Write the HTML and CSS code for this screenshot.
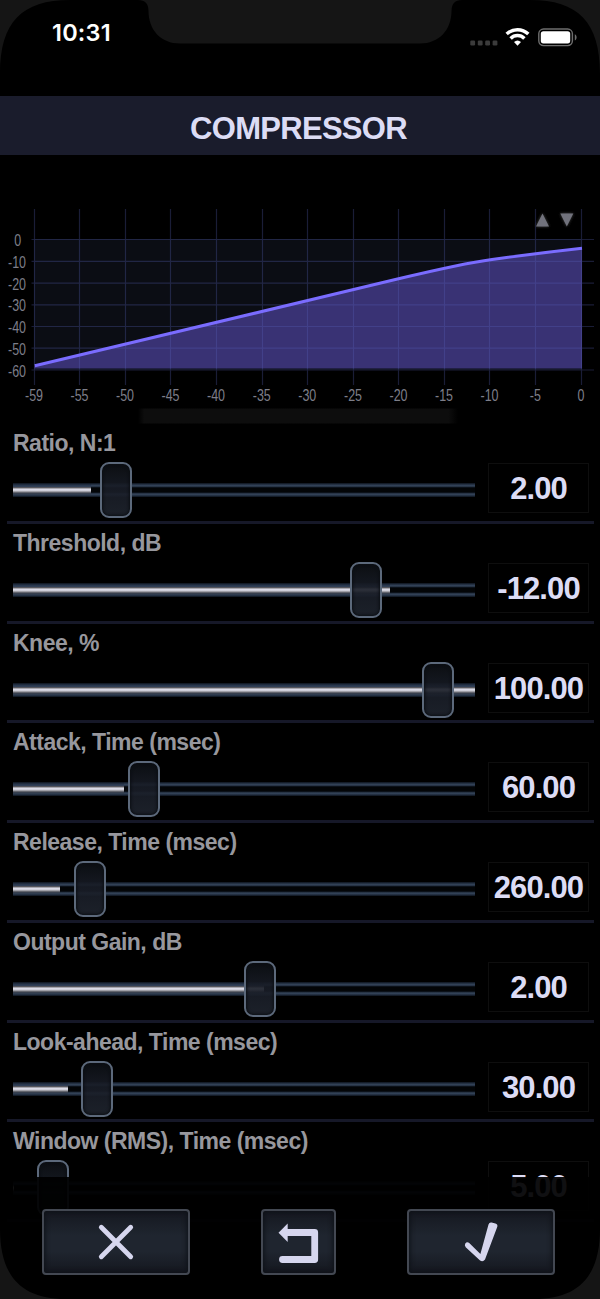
FILE: index.html
```html
<!DOCTYPE html>
<html lang="en">

<head>
    <meta charset="UTF-8">
    <meta name="viewport" content="width=device-width, initial-scale=1.0">
    <title>Compressor</title>
    <link rel="stylesheet" href="styles.css">
</head>

<body>
    <main class="screen">
        <header class="status">
            <span class="time">10:31</span>
            <svg class="status-icons" width="108" height="24" viewBox="0 0 108 24">
                <g fill="#3b3b3b">
                    <rect x="0.3" y="15.6" width="4.8" height="4.8" rx="1.2" />
                    <rect x="7.8" y="15.6" width="4.8" height="4.8" rx="1.2" />
                    <rect x="15.2" y="15.6" width="4.8" height="4.8" rx="1.2" />
                    <rect x="22.6" y="15.6" width="4.8" height="4.8" rx="1.2" />
                </g>
                <g fill="none" stroke="#fff" stroke-width="3.5">
                    <path d="M36.7 9a15.6 15.6 0 0 1 21.600 0" />
                    <path d="M40.6 13.400a9.800 9.800 0 0 1 13.800 0" />
                </g>
                <path d="M47.500 20.800l-3.500-3.700a5.200 5.200 0 0 1 7 0z" fill="#fff" />
                <rect x="68.800" y="4" width="33.600" height="16.600" rx="4.800" fill="none" stroke="#6e6e6e" stroke-width="1.400" />
                <rect x="70.800" y="6.200" width="29.400" height="12.200" rx="2.600" fill="#fff" />
                <path d="M104.800 9.200c2.400 1 2.400 5.200 0 6.200z" fill="#6e6e6e" />
            </svg>
        </header>

        <h1>COMPRESSOR</h1>

        <section class="graph">
            <svg width="600" height="240" viewBox="0 185 600 240">
                <defs>
                    <filter id="glow" x="-50%" y="-50%" width="200%" height="200%">
                        <feDropShadow dx="0" dy="0" stdDeviation="1.6" flood-color="#444" />
                    </filter>
                    <linearGradient id="band">
                        <stop offset="0" stop-color="#000" />
                        <stop offset="0.02" stop-color="#0d0d0d" />
                        <stop offset="0.97" stop-color="#0d0d0d" />
                        <stop offset="1" stop-color="#000" />
                    </linearGradient>
                </defs>
                <rect x="34" y="239" width="547.5" height="131" fill="#0b0d14" />
                <path class="area" d="M34.5 366L398.5 278.8C450 266.5 470 262.5 492 259.5S540 253 582 248.3V368.5H34.5z" />
                <path class="grid" d="M34.5 209V385M79.5 209V385M125.5 209V385M170.5 209V385M216.5 209V385M262.5 209V385M307.5 209V385M353.5 209V385M398.5 209V385M444.5 209V385M489.5 209V385M535.5 209V385M581.5 209V385M31.5 239.5H594M31.5 261.3H594M31.5 283.2H594M31.5 304.8H594M31.5 326.5H594M31.5 348.2H594M31.5 370H594" />
                <path class="curve" d="M34.8 365.8L398.5 278.8C450 266.5 470 262.5 492 259.5S540 253 582 248.3" />
                <g class="labels">
                    <text transform="translate(17.7 246) scale(.79 1)">0</text>
                    <text transform="translate(17 267.8) scale(.79 1)">-10</text>
                    <text transform="translate(17 289.5) scale(.79 1)">-20</text>
                    <text transform="translate(17 311.3) scale(.79 1)">-30</text>
                    <text transform="translate(17 333.1) scale(.79 1)">-40</text>
                    <text transform="translate(17 354.8) scale(.79 1)">-50</text>
                    <text transform="translate(17 376.7) scale(.79 1)">-60</text>
                    <text transform="translate(34 400.7) scale(.79 1)">-59</text>
                    <text transform="translate(79.5 400.7) scale(.79 1)">-55</text>
                    <text transform="translate(125 400.7) scale(.79 1)">-50</text>
                    <text transform="translate(170.5 400.7) scale(.79 1)">-45</text>
                    <text transform="translate(216 400.7) scale(.79 1)">-40</text>
                    <text transform="translate(261.8 400.7) scale(.79 1)">-35</text>
                    <text transform="translate(307.3 400.7) scale(.79 1)">-30</text>
                    <text transform="translate(353 400.7) scale(.79 1)">-25</text>
                    <text transform="translate(398.5 400.7) scale(.79 1)">-20</text>
                    <text transform="translate(444 400.7) scale(.79 1)">-15</text>
                    <text transform="translate(489.5 400.7) scale(.79 1)">-10</text>
                    <text transform="translate(535.3 400.7) scale(.79 1)">-5</text>
                    <text transform="translate(581 400.7) scale(.79 1)">0</text>
                </g>
                <path d="M542.5 213.5L549 226.5H536zM560.3 213.5H573.3L566.8 226.5z" fill="#71727c" filter="url(#glow)" />
                <rect x="138" y="408.5" width="320" height="15" fill="url(#band)" />
            </svg>
        </section>

        <section class="params">
            <div class="param">
                <label>Ratio, N:1</label>
                <div class="control">
                    <div class="track"><div class="fill" style="width: 16.9%"></div><div class="thumb" style="left: 18.9%"></div></div>
                    <output>2.00</output>
                </div>
            </div>
            <div class="param">
                <label>Threshold, dB</label>
                <div class="control">
                    <div class="track"><div class="fill" style="width: 81.6%"></div><div class="thumb" style="left: 73%"></div></div>
                    <output>-12.00</output>
                </div>
            </div>
            <div class="param">
                <label>Knee, %</label>
                <div class="control">
                    <div class="track"><div class="fill" style="width: 100%"></div><div class="thumb" style="left: 88.6%"></div></div>
                    <output>100.00</output>
                </div>
            </div>
            <div class="param">
                <label>Attack, Time (msec)</label>
                <div class="control">
                    <div class="track"><div class="fill" style="width: 24.1%"></div><div class="thumb" style="left: 24.8%"></div></div>
                    <output>60.00</output>
                </div>
            </div>
            <div class="param">
                <label>Release, Time (msec)</label>
                <div class="control">
                    <div class="track"><div class="fill" style="width: 10.1%"></div><div class="thumb" style="left: 13.2%"></div></div>
                    <output>260.00</output>
                </div>
            </div>
            <div class="param">
                <label>Output Gain, dB</label>
                <div class="control">
                    <div class="track"><div class="fill" style="width: 54.3%"></div><div class="thumb" style="left: 50%"></div></div>
                    <output>2.00</output>
                </div>
            </div>
            <div class="param">
                <label>Look-ahead, Time (msec)</label>
                <div class="control">
                    <div class="track"><div class="fill" style="width: 12%"></div><div class="thumb" style="left: 14.8%"></div></div>
                    <output>30.00</output>
                </div>
            </div>
            <div class="param">
                <label>Window (RMS), Time (msec)</label>
                <div class="control">
                    <div class="track"><div class="fill" style="width: 0.3%"></div><div class="thumb" style="left: 5.1%"></div></div>
                    <output>5.00</output>
                </div>
            </div>
        </section>

        <footer class="actions">
            <button class="wide" aria-label="Cancel">
                <svg width="40" height="40" viewBox="0 0 40 40">
                    <path d="M5.3 5.3L34.7 34.7M34.7 5.3L5.3 34.7" fill="none" stroke="#d6d6ee" stroke-width="4.8" stroke-linecap="round" />
                </svg>
            </button>
            <button class="small" aria-label="Reset">
                <svg width="44" height="44" viewBox="0 0 44 44">
                    <path d="M9 12.5H37.7V39.500H5.500" fill="none" stroke="#d6d6ee" stroke-width="6.800" stroke-linejoin="round" stroke-linecap="round" />
                    <path d="M1.500 12.700L10.700 3.500V22z" fill="#d6d6ee" />
                </svg>
            </button>
            <button class="wide" aria-label="Apply">
                <svg width="40" height="44" viewBox="0 0 40 44">
                    <path d="M4.300 23.600Q6 21.300 8.500 23.300L19.400 34L27.500 4.500Q28.200 2.200 30.600 2.600L34.400 3.400Q37 4.200 36.300 6.800L24 39.500Q21.800 42.700 18.800 40.300L4.700 27.300Q3.200 25.400 4.300 23.600z" fill="#d6d6ee" />
                </svg>
            </button>
        </footer>

        <!-- phone bezel: rounded corners and notch -->
        <svg class="bezel" width="600" height="1299" viewBox="0 0 600 1299">
            <path d="M0 0H70C22 0 0 22 0 74zM600 0H530C578 0 600 22 600 74zM0 1299H66C22 1299 0 1277 0 1229zM600 1299H534C578 1299 600 1277 600 1229z" />
            <path d="M138 0Q148.500 0 148.500 11C148.500 30 161 43.500 180 43.500H420C439 43.500 451.500 30 451.500 11Q451.500 0 462 0z" />
        </svg>
    </main>
</body>

</html>
```

FILE: styles.css
```css
* {
    padding: 0;
    margin: 0;
    box-sizing: border-box;
}

body {
    background-color: black;
    font-family: "Liberation Sans", Arial, sans-serif;
}

.screen {
    position: relative;
    width: 600px;
    height: 1299px;
    overflow: hidden;
    background-color: black;
}

.status {
    display: flex;
    justify-content: space-between;
    height: 96px;
    padding: 19px 22px 0 52px;
}

.time {
    font: 600 23.5px/28px Inter, sans-serif;
    letter-spacing: 0.2px;
    color: white;
}

.status-icons {
    margin-top: 6px;
}

h1 {
    height: 59px;
    padding-right: 3px;
    background-color: #1a1c2c;
    color: #dcdcf5;
    font-size: 31px;
    letter-spacing: -0.7px;
    line-height: 66px;
    text-align: center;
}

.graph {
    height: 269px;
    padding-top: 30px;
}

.graph svg {
    display: block;
}

.area {
    fill: #393274;
}

.grid {
    fill: none;
    stroke: rgba(90, 100, 190, 0.29);
    stroke-width: 1.2;
}

.curve {
    fill: none;
    stroke: #7a6cff;
    stroke-width: 3;
}

.labels text {
    fill: #7d7e89;
    font-size: 15.8px;
    text-anchor: middle;
}

.param {
    height: 99.75px;
    margin: 0 6px 0 7px;
    padding: 6px 5px 0 6px;
    border-bottom: 3px solid #161828;
}

.param label {
    display: block;
    height: 33px;
    color: #97979d;
    font-size: 23px;
    font-weight: bold;
    letter-spacing: -0.5px;
    line-height: 27px;
}

.control {
    display: flex;
    justify-content: space-between;
    align-items: center;
    height: 50px;
}

.track {
    position: relative;
    width: 462px;
    height: 14px;
    margin-top: 4px;
    background: linear-gradient(#0c121b 0, #2c3b50 2px, #36465c 3px, #0b1119 4.5px, #030507 5px, #030507 9px, #0b1119 9.5px, #36465c 11px, #2c3b50 12px, #0c121b 14px);
}

.fill {
    height: 14px;
    background: linear-gradient(#0c121b 0, #26344a 2px, #34435a 4px, #55555c 4.5px, #a5a5ad 5.5px, #dadae6 6.5px, #c9c9d2 8px, #77777d 9px, #38404e 10.5px, #2c3b50 12px, #0c121b 14px);
}

.thumb {
    position: absolute;
    top: -21px;
    width: 32px;
    height: 56px;
    border: 2px solid #5c697b;
    border-radius: 9px;
    background: linear-gradient(rgba(12, 15, 19, 0.96), rgba(24, 28, 38, 0.9) 45%, rgba(29, 34, 43, 0.96));
    box-shadow: inset 0 0 3px 1px #0b0e13;
}

output {
    width: 101px;
    height: 50px;
    border: 1px solid #0e0e0e;
    color: #dcdcf5;
    font-size: 31px;
    font-weight: bold;
    letter-spacing: -0.9px;
    line-height: 49px;
    text-align: center;
}

.actions {
    position: absolute;
    left: 0;
    right: 0;
    bottom: 0;
    display: flex;
    justify-content: space-between;
    align-items: flex-start;
    height: 122px;
    padding: 32px 45px 0 42px;
    background-color: rgba(0, 0, 0, 0.93);
}

button {
    display: flex;
    justify-content: center;
    align-items: center;
    height: 66px;
    border: 2px solid #434852;
    border-radius: 4px;
    background: linear-gradient(#151820, #1f252f 40%, #1f252f 65%, #14171f);
    box-shadow: inset 0 0 5px 1px #0e1117;
}

.wide {
    width: 148px;
}

.small {
    width: 75px;
}

.bezel {
    position: absolute;
    top: 0;
    left: 0;
    fill: #151515;
    pointer-events: none;
}
```
